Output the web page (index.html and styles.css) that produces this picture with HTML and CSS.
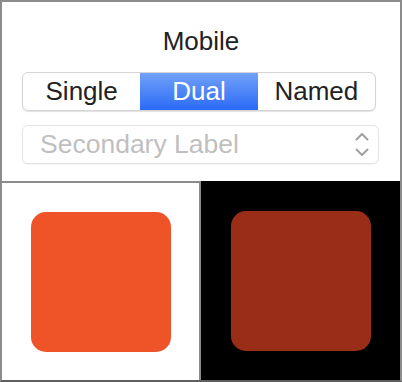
FILE: index.html
```html
<!DOCTYPE html>
<html lang="en">
<head>
    <meta charset="UTF-8">
    <title>Mobile</title>
    <link rel="stylesheet" href="styles.css">
</head>
<body>

<div class="window">
    <div class="controls">
        <div class="title">Mobile</div>

        <div class="segmented">
            <div class="segment">Single</div>
            <div class="segment selected">Dual</div>
            <div class="segment">Named</div>
        </div>

        <div class="popup">
            <span class="popup-label">Secondary Label</span>
            <svg class="chevrons" width="14" height="26" viewBox="0 0 14 26">
                <polyline points="1.5,7.5 7,2 12.5,7.5" />
                <polyline points="1.5,17.5 7,23 12.5,17.5" />
            </svg>
        </div>
    </div>

    <div class="preview">
        <div class="swatch-cell light">
            <div class="swatch"></div>
        </div>
        <div class="swatch-cell dark">
            <div class="swatch"></div>
        </div>
    </div>
</div>

</body>
</html>
```

FILE: styles.css
```css
body {
    margin: 0;
    padding: 0;
    font-family: "Liberation Sans", Arial, sans-serif;
    background-color: white;
}

.window {
    width: 402px;
    height: 382px;
    box-sizing: border-box;
    border: 2px solid #8c8c8c;
    border-bottom-color: #5e5e5e;
    display: flex;
    flex-direction: column;
    background-color: white;
}

.controls {
    height: 179px;
    padding: 25px 20px 0 20px;
    box-sizing: border-box;
}

.title {
    text-align: center;
    font-size: 26px;
    line-height: 28px;
    color: #222;
}

.segmented {
    display: flex;
    margin: 17px 4px 0 0;
    height: 39px;
    box-sizing: border-box;
    border: 1px solid #d4d4d4;
    border-radius: 6px;
    overflow: hidden;
    box-shadow: 0 1px 1px rgba(0, 0, 0, 0.12);
}

.segment {
    flex: 1;
    display: flex;
    align-items: center;
    justify-content: center;
    font-size: 26px;
    color: #222;
}

.segment.selected {
    color: white;
    background: linear-gradient(to bottom, #71a1f8, #2b6af6);
}

.popup {
    margin: 14px 1px 0 0;
    height: 39px;
    box-sizing: border-box;
    border: 1px solid #e4e4e4;
    border-radius: 6px;
    box-shadow: 0 1px 1px rgba(0, 0, 0, 0.05);
    display: flex;
    align-items: center;
    padding: 0 9px 0 17px;
}

.popup-label {
    flex: 1;
    font-size: 26.5px;
    color: #bfbfbf;
}

.chevrons polyline {
    fill: none;
    stroke: #a0a0a0;
    stroke-width: 2;
    stroke-linecap: round;
    stroke-linejoin: round;
}

.preview {
    flex: 1;
    display: flex;
}

.swatch-cell {
    display: flex;
    align-items: center;
    justify-content: center;
}

.swatch-cell.light {
    width: 199px;
    box-sizing: border-box;
    border-top: 2px solid #8c8c8c;
    border-right: 2px solid #8c8c8c;
    background-color: white;
}

.swatch-cell.dark {
    flex: 1;
    background-color: black;
}

.swatch {
    width: 140px;
    height: 140px;
    border-radius: 15px;
}

.light .swatch {
    background-color: #ef5428;
}

.dark .swatch {
    background-color: #9a2d17;
}
```
